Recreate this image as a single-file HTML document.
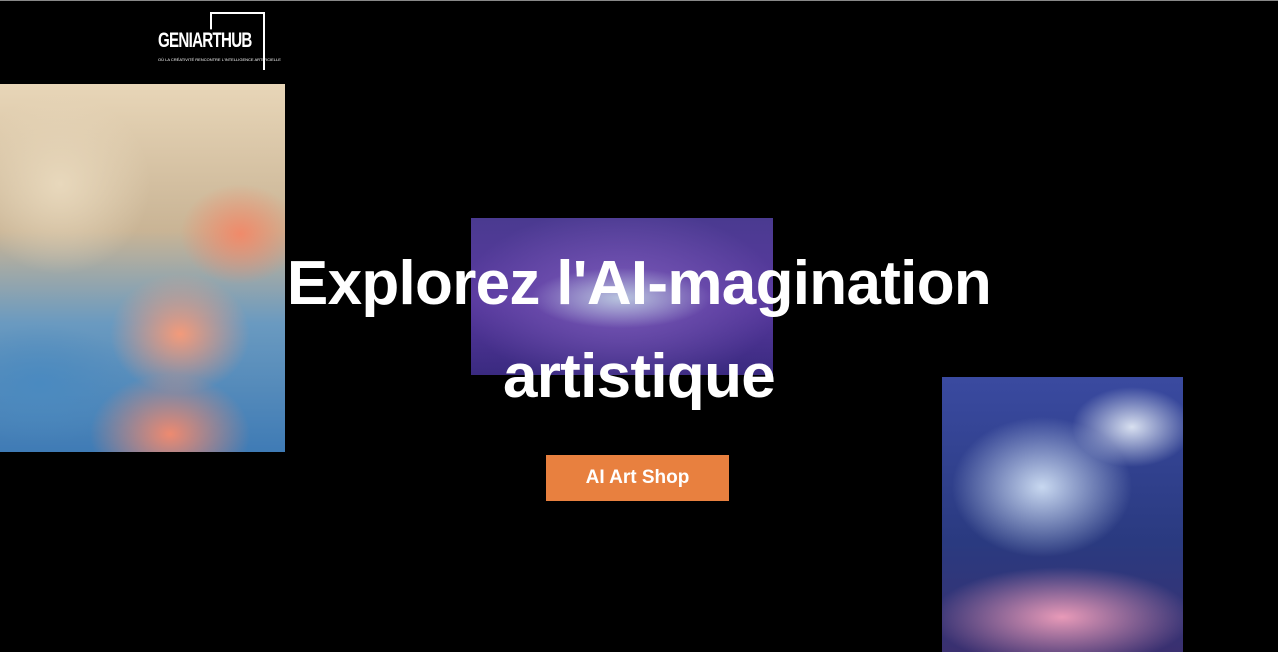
<!DOCTYPE html>
<html><head><meta charset="utf-8"><style>
html,body{margin:0;padding:0;width:1278px;height:652px;background:#000;overflow:hidden;position:relative;font-family:"Liberation Sans",sans-serif}
.top{position:absolute;left:0;top:0;width:1278px;height:1px;background:#888}
.img{position:absolute}
#a{left:0;top:84px;width:285px;height:368px;background:
radial-gradient(ellipse 60px 50px at 240px 150px,#f08a6a,transparent),
radial-gradient(ellipse 70px 60px at 180px 250px,#f39a7a,transparent),
radial-gradient(ellipse 80px 60px at 170px 350px,#ee8a70,transparent),
radial-gradient(ellipse 90px 90px at 60px 100px,#e8d8bc,transparent),
radial-gradient(ellipse 100px 60px at 40px 300px,#4a8ac0,transparent),
linear-gradient(180deg,#e8d6b8 0%,#c9b495 40%,#6a9ac0 65%,#3f7bb5 100%)}
#b{left:471px;top:218px;width:302px;height:157px;background:
radial-gradient(ellipse 90px 30px at 150px 80px,#b8c4de,transparent),
radial-gradient(ellipse 160px 90px at 150px 80px,#7a5ab8,transparent),
linear-gradient(180deg,#4a3a90,#5a3aa0 50%,#3a2a80)}
#c{left:942px;top:377px;width:241px;height:275px;background:
radial-gradient(ellipse 90px 70px at 100px 110px,#c8d8f0,transparent),
radial-gradient(ellipse 60px 40px at 190px 50px,#d8e0f0,transparent),
radial-gradient(ellipse 130px 50px at 120px 240px,#e89ab8,transparent),
linear-gradient(180deg,#3a4aa0,#2a3a80 60%,#3a3070)}
h1{position:absolute;left:0;width:1278px;top:237px;margin:0;text-align:center;color:#fff;font-weight:bold;font-size:62px;line-height:93px;letter-spacing:-0.7px}
.btn{position:absolute;left:546px;top:455px;width:183px;height:46px;background:#e8803f;color:#fff;font-weight:bold;font-size:19px;line-height:46px;text-align:center}
.logo{position:absolute;left:157px;top:12px;width:110px;height:58px}
</style></head><body>
<div class="top"></div>
<div class="logo">
<div style="position:absolute;left:53px;top:0;width:55px;height:58px;border-top:2px solid #fff;border-right:2px solid #fff;border-left:2px solid #fff;box-sizing:border-box;clip-path:polygon(0 0,100% 0,100% 100%,96% 100%,96% 4%,4% 4%,4% 30%,0 30%)"></div>
<div style="position:absolute;left:1px;top:16px;color:#fff;font-size:21px;font-weight:bold;letter-spacing:-1px;transform:scaleX(0.72);transform-origin:left;line-height:26px">GENIARTHUB</div>
<div style="position:absolute;left:1px;top:45px;color:#fff;font-size:4px;white-space:nowrap">OÙ LA CRÉATIVITÉ RENCONTRE L'INTELLIGENCE ARTIFICIELLE</div>
</div>
<div class="img" id="a"></div>
<div class="img" id="b"></div>
<div class="img" id="c"></div>
<h1>Explorez l'AI-magination<br>artistique</h1>
<div class="btn">AI Art Shop</div>
</body></html>
